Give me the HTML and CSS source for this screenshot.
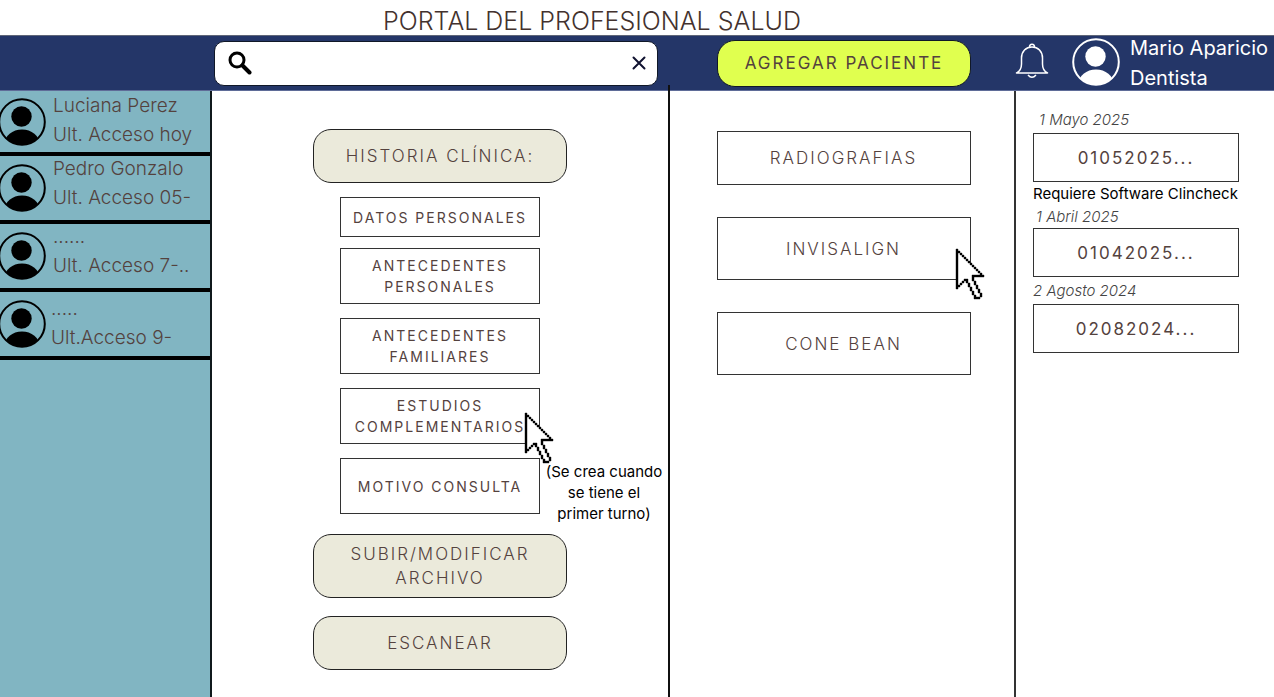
FILE: index.html
```html
<!DOCTYPE html>
<html lang="es">
<head>
<meta charset="utf-8">
<meta name="viewport" content="width=device-width, initial-scale=1">
<title>Portal del profesional salud</title>
<link rel="stylesheet" href="styles.css">
</head>
<body>
<svg class="sprite" aria-hidden="true">
  <symbol id="avatar" viewBox="0 0 48 48">
    <clipPath id="ring"><circle cx="24" cy="24" r="23"/></clipPath>
    <circle cx="24" cy="24" r="22.8" fill="none" stroke="currentColor" stroke-width="2"/>
    <circle cx="23.5" cy="18.5" r="10.2" fill="currentColor"/>
    <ellipse cx="24" cy="46" rx="17.5" ry="14.5" fill="currentColor" clip-path="url(#ring)"/>
  </symbol>
  <symbol id="pointer" viewBox="0 0 14 25" overflow="visible">
    <path fill="#fff" d="M0 0L13 13H9V16L12 22V24H9L5 15L1 20H0Z"/>
    <path fill="#000" stroke="#000" stroke-width=".2" d="M0 0h1v20h-1zM1 1h1v1h-1zM2 2h1v1h-1zM3 3h1v1h-1zM4 4h1v1h-1zM5 5h1v1h-1zM6 6h1v1h-1zM7 7h1v1h-1zM8 8h1v1h-1zM9 9h1v1h-1zM10 10h1v1h-1zM11 11h1v1h-1zM12 12h1v1h-1zM8 13h6v1h-6zM1 18h1v1h-1zM2 17h1v1h-1zM3 16h1v1h-1zM4 15h1v1h-1zM5 15h1v2h-1zM6 17h1v2h-1zM7 19h1v2h-1zM8 21h1v2h-1zM9 23h1v1h-1zM9 24h3v1h-3zM12 22h1v2h-1zM11 20h1v2h-1zM10 18h1v2h-1zM9 16h1v2h-1zM8 14h1v2h-1z"/>
  </symbol>
</svg>

<header>
  <h1 class="title">PORTAL DEL PROFESIONAL SALUD</h1>
  <div class="bar columns">
    <form class="search" role="search">
      <svg class="search-icon" viewBox="0 0 24 24" aria-hidden="true"><circle cx="9" cy="9" r="7" fill="none" stroke="#000" stroke-width="3"/><path d="M14.5 14.5L21.5 21.5" stroke="#000" stroke-width="4" stroke-linecap="round"/></svg>
      <input class="search-input" type="text" aria-label="Buscar paciente">
      <button class="clear" type="reset" aria-label="Borrar búsqueda"><svg viewBox="0 0 14 14" width="14" height="14"><path d="M1.500 1.500L12.500 12.500M12.500 1.500L1.500 12.500" stroke="#101230" stroke-width="2" stroke-linecap="round"/></svg></button>
    </form>
    <button class="add" type="button">AGREGAR PACIENTE</button>
    <div class="account">
      <button class="bell" type="button" aria-label="Notificaciones"><svg viewBox="0 0 34 36" width="34" height="36" fill="none" stroke="#fff" stroke-width="1.500"><path d="M1.500 30Q6.500 27.500 6.500 21V15C6.500 8.500 11 4 17 4S27.500 8.500 27.500 15V21Q27.500 27.500 32.500 30Z" stroke-linejoin="round"/><path d="M14.500 4.200C14.500 .2 19.500 .2 19.500 4.200M13 32Q17 36.500 21 32"/></svg></button>
      <svg class="avatar avatar-user" aria-hidden="true"><use href="#avatar"/></svg>
      <p class="user">Mario Aparicio<br>Dentista</p>
    </div>
  </div>
</header>

<main class="columns content">
  <aside class="sidebar">
    <ul class="patients">
      <li class="patient"><svg class="avatar" aria-hidden="true"><use href="#avatar"/></svg><p class="patient-text">Luciana Perez<br>Ult. Acceso hoy</p></li>
      <li class="patient"><svg class="avatar" aria-hidden="true"><use href="#avatar"/></svg><p class="patient-text">Pedro Gonzalo<br>Ult. Acceso 05-</p></li>
      <li class="patient"><svg class="avatar" aria-hidden="true"><use href="#avatar"/></svg><p class="patient-text">......<br>Ult. Acceso 7-..</p></li>
      <li class="patient patient-last"><svg class="avatar" aria-hidden="true"><use href="#avatar"/></svg><p class="patient-text">.....<br>Ult.Acceso 9-</p></li>
    </ul>
  </aside>

  <section class="record">
    <button class="pill" type="button">HISTORIA CLÍNICA:</button>
    <div class="options">
      <button class="box option option-short" type="button">DATOS PERSONALES</button>
      <button class="box option" type="button">ANTECEDENTES PERSONALES</button>
      <button class="box option" type="button">ANTECEDENTES FAMILIARES</button>
      <button class="box option" type="button">ESTUDIOS COMPLEMENTARIOS<svg class="pointer pointer-study" aria-hidden="true"><use href="#pointer"/></svg></button>
      <button class="box option" type="button">MOTIVO CONSULTA</button>
      <p class="note">(Se crea cuando se tiene el primer turno)</p>
    </div>
    <button class="pill pill-tall" type="button">SUBIR/MODIFICAR ARCHIVO</button>
    <button class="pill" type="button">ESCANEAR</button>
  </section>

  <section class="studies">
    <button class="box study study-short" type="button">RADIOGRAFIAS</button>
    <button class="box study" type="button">INVISALIGN<svg class="pointer pointer-align" aria-hidden="true"><use href="#pointer"/></svg></button>
    <button class="box study" type="button">CONE BEAN</button>
  </section>

  <section class="files">
    <p class="date date-first">1 Mayo 2025</p>
    <button class="box file" type="button">01052025...</button>
    <p class="requirement">Requiere Software Clincheck</p>
    <p class="date date-second">1 Abril 2025</p>
    <button class="box file" type="button">01042025...</button>
    <p class="date date-third">2 Agosto 2024</p>
    <button class="box file" type="button">02082024...</button>
  </section>
</main>
</body>
</html>
```

FILE: styles.css
```css
* { box-sizing: border-box; }

body {
  margin: 0;
  min-height: 100vh;
  display: flex;
  flex-direction: column;
  background: #fff;
  color: #54423e;
  font-family: Inter, "Liberation Sans", sans-serif;
  font-weight: 300;
}

h1, p, ul { margin: 0; padding: 0; font-weight: inherit; }
button, input { font: inherit; color: inherit; }
button { padding: 0; cursor: pointer; }
.sprite { position: absolute; width: 0; height: 0; }

.columns {
  display: grid;
  grid-template-columns: 212fr 458fr 346fr 258fr;
}

.title {
  padding: 7px 90px 0 0;
  color: #43322e;
  font-size: 25px;
  line-height: 28px;
  text-align: center;
}

.bar {
  height: 56px;
  grid-template-rows: 100%;
  align-items: center;
  background: #243668;
  border-top: 1px solid #5f6678;
  border-bottom: 1px solid #5f6c98;
}

.search {
  grid-column: 2;
  display: flex;
  align-items: center;
  height: 45px;
  margin: 0 12px 0 2px;
  padding: 0 11px 0 13px;
  background: #fff;
  border: 1px solid #101828;
  border-radius: 10px;
}
.search-icon { width: 24px; height: 24px; flex: none; }
.search-input { flex: 1; min-width: 0; border: 0; outline: 0; background: none; }
.clear { display: flex; border: 0; background: none; }

.add {
  justify-self: center;
  width: 254px;
  height: 47px;
  margin-left: 2px;
  border: 1px solid #101828;
  border-radius: 18px;
  background: #e0ff4f;
  font-size: 17px;
  font-weight: 400;
  letter-spacing: 2px;
}

.account { display: flex; align-items: center; margin-left: -1px; color: #fff; }
.bell { display: flex; flex: none; margin: 0 23px 4px 0; border: 0; background: none; }
.avatar { flex: none; width: 48px; height: 48px; }
.avatar-user { margin: 0 10px 2px 0; }
.user {
  font-size: 20px;
  line-height: 30px;
  font-weight: 400;
  white-space: nowrap;
}

.content { flex: 1; }

.sidebar { background: #81b5c2; border-right: 2px solid #10191c; }
.patients { list-style: none; }
.patient {
  display: flex;
  align-items: center;
  height: 68px;
  border-bottom: 4px solid #000;
  color: #000;
}
.patient:first-child { height: 65px; }
.patient .avatar { margin: 0 7px 0 -2px; }
.patient-text {
  align-self: flex-start;
  margin-top: -2px;
  color: #54423e;
  font-size: 19px;
  line-height: 29px;
  white-space: nowrap;
}
.patient:first-child .patient-text { margin-top: 0; }
.patient-last .patient-text { align-self: center; margin-left: -2px; }

.record {
  position: relative;
  display: flex;
  flex-direction: column;
  align-items: center;
  padding: 38px 0 27px;
  border-right: 2px solid #101010;
}
/* The divider reaches up into the bar. */
.record::after {
  content: "";
  position: absolute;
  top: -6px;
  right: -2px;
  width: 2px;
  height: 6px;
  background: #101010;
}

.pill {
  width: 254px;
  height: 54px;
  border: 1px solid #222;
  border-radius: 18px;
  background: #ebeadb;
  font-size: 17px;
  line-height: 24px;
  letter-spacing: 2px;
}
.pill-tall { height: 64px; margin: 10px 0 18px; padding: 0 24px; }

.box {
  position: relative;
  border: 1px solid #333;
  background: #fff;
}

.options {
  align-self: stretch;
  display: grid;
  grid-template-columns: 1fr 200px 1fr;
  align-items: start;
  row-gap: 14px;
  padding-top: 14px;
}
.option {
  grid-column: 2;
  height: 56px;
  font-size: 14px;
  font-weight: 400;
  line-height: 21px;
  letter-spacing: 2px;
}
.option-short { height: 40px; margin-bottom: -3px; }
.note {
  grid-column: 3;
  padding: 3px 5px 0;
  color: #000;
  font-size: 15px;
  line-height: 21px;
  font-weight: 400;
  text-align: center;
}

.pointer { position: absolute; z-index: 1; width: 28px; height: 50px; overflow: visible; }
.pointer-study { top: 24px; right: -14px; }
.pointer-align { top: 31px; right: -14px; }

.studies {
  display: flex;
  flex-direction: column;
  align-items: center;
  gap: 32px;
  padding: 40px 0 0 3px;
  border-right: 2px solid #333;
}
.study { width: 254px; height: 63px; font-size: 17px; letter-spacing: 2px; }
.study-short { height: 54px; }

.files { padding: 17px 35px 0 17px; font-size: 15px; }
.date { color: #444; font-style: italic; }
.date-first { padding: 0 0 1px 6px; line-height: 24px; }
.date-second { padding-left: 3px; line-height: 23px; }
.date-third { line-height: 27px; }
.requirement { color: #000; font-weight: 400; line-height: 23px; white-space: nowrap; }
.file {
  display: block;
  width: 100%;
  height: 49px;
  font-size: 17px;
  font-weight: 400;
  letter-spacing: 2px;
}
```
